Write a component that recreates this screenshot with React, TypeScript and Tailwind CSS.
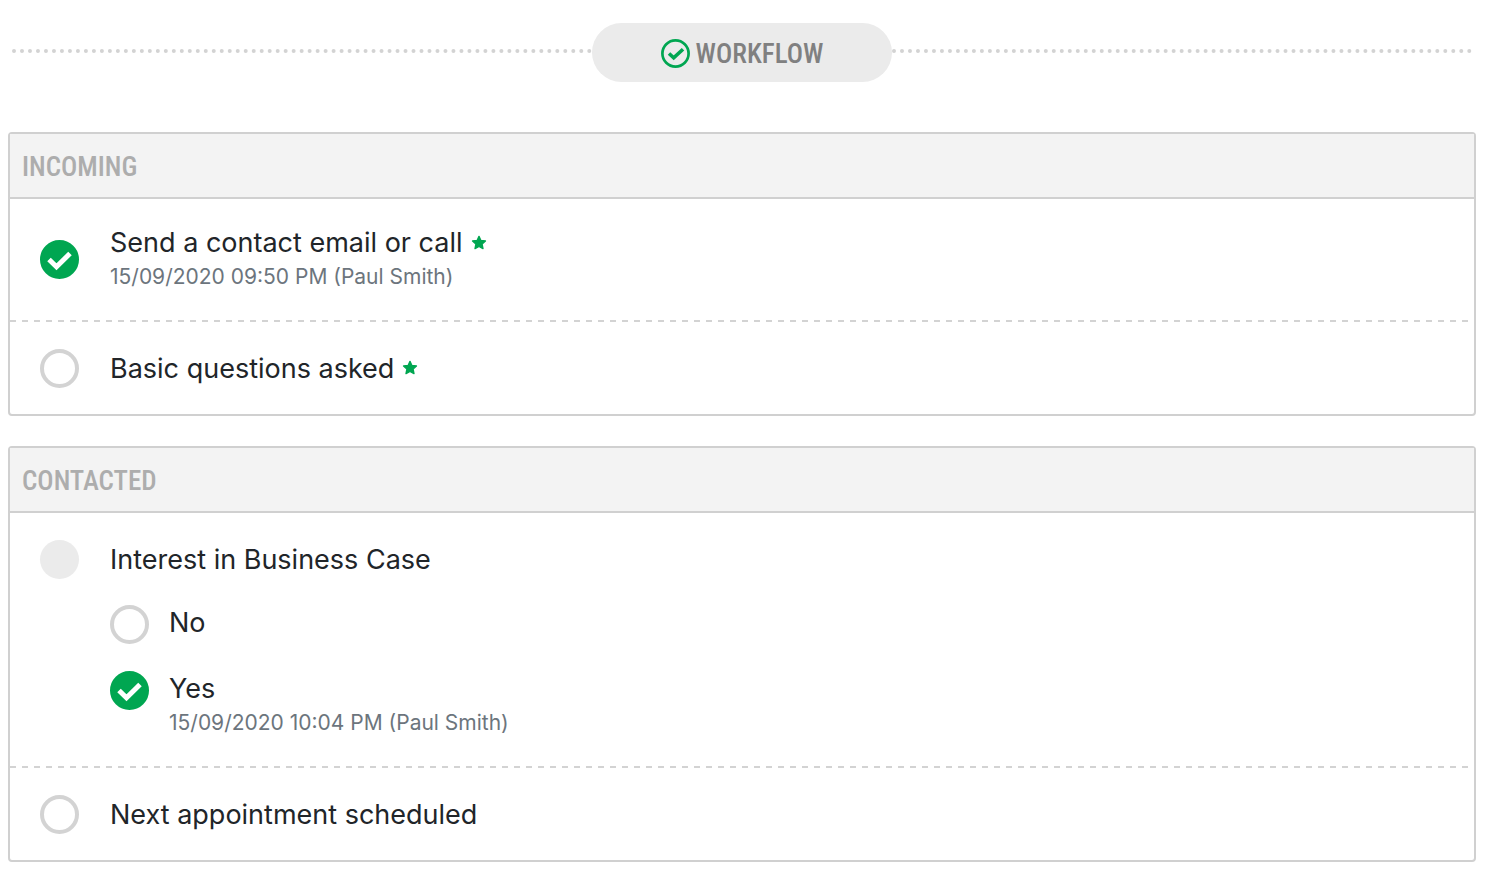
import type { ReactNode } from "react";

type TaskProps = {
    id: string;
    title: string;
    done?: boolean;
    required?: boolean;
    note?: string;
};

const Star = () => (
    <svg viewBox="0 0 24 24" className="mb-1 ml-2 inline-block size-4 align-middle" aria-label="required">
        <path
            d="M12 2l2.900 6.200 6.800.800-5 4.700 1.300 6.800-6-3.300-6 3.300 1.300-6.800-5-4.700 6.800-.800z"
            fill="#00a651"
            stroke="#00a651"
            strokeWidth="2"
            strokeLinejoin="round"
        />
    </svg>
);

type MarkProps = {
    id: string;
    type: "checkbox" | "radio";
    name?: string;
    done?: boolean;
};

const Mark = ({ id, type, name, done }: MarkProps) => (
    <span className="grid shrink-0">
        <input
            id={id}
            type={type}
            name={name}
            defaultChecked={done}
            className="peer col-start-1 row-start-1 size-[39px] appearance-none rounded-full border-4 border-[#d3d3d3] bg-white checked:border-[#00a651] checked:bg-[#00a651]"
        />
        <svg
            viewBox="0 0 39 39"
            fill="none"
            className="pointer-events-none invisible col-start-1 row-start-1 size-[39px] peer-checked:visible"
        >
            <path d="M9 19.500l7.500 7.300L30 13.500" stroke="#fff" strokeWidth="5" />
        </svg>
    </span>
);

const TaskText = ({ id, title, required, note }: TaskProps) => (
    <div>
        <label htmlFor={id} className="block text-[27px] leading-[35px] text-[#212529]">
            {title}
            {required && <Star />}
        </label>
        {note && <p className="text-[21px] leading-[34px] text-[#6c757d]">{note}</p>}
    </div>
);

const Task = (props: TaskProps) => (
    <li className="flex min-h-[92px] items-center gap-[31px] py-[26px] pl-[30px]">
        <Mark id={props.id} type="checkbox" done={props.done} />
        <TaskText {...props} />
    </li>
);

const Option = (props: TaskProps & { group: string }) => (
    <div className="flex min-h-10 items-start gap-5">
        <Mark id={props.id} type="radio" name={props.group} done={props.done} />
        <TaskText {...props} />
    </div>
);

const Divider = () => (
    <li
        role="separator"
        className="h-0.5 bg-[repeating-linear-gradient(90deg,#d3d3d3_0_6px,transparent_6px_12px)]"
    />
);

const Panel = ({ title, children }: { title: string; children: ReactNode }) => (
    <section className="rounded border-2 border-[#d0d0d0] bg-white">
        <h2 className="border-b-2 border-[#d0d0d0] bg-[#f3f3f3] px-3 pt-[15px] pb-3 font-['Roboto_Condensed','Liberation_Sans_Narrow','Liberation_Sans',sans-serif] text-[27px] leading-9 font-medium text-[#adadad]">
            {title}
        </h2>
        <ul>{children}</ul>
    </section>
);

export default function App() {
    return (
        <main className="bg-white pt-[23px] pr-2.5 pb-2 pl-2 font-[Inter,sans-serif]">
            {/* Header */}
            <header className="mx-1 mb-[50px] flex items-center">
                <div className="mb-1 flex-1 border-t-4 border-dotted border-[#d3d3d3]" />
                <h1 className="flex h-[59px] w-[300px] items-center justify-center gap-1.5 rounded-full bg-[#ebebeb] pt-0.5 font-['Roboto_Condensed','Liberation_Sans_Narrow','Liberation_Sans',sans-serif] text-[27px] leading-9 font-medium text-[#808080]">
                    <svg viewBox="0 0 29 29" fill="none" stroke="#00a651" className="size-[29px]">
                        <circle cx="14.500" cy="14.500" r="13.100" strokeWidth="2.700" />
                        <path d="M8 14.500l4.700 4.400L22 10.200" strokeWidth="3.600" />
                    </svg>
                    WORKFLOW
                </h1>
                <div className="mb-1 flex-1 border-t-4 border-dotted border-[#d3d3d3]" />
            </header>

            {/* Stages */}
            <div className="space-y-[30px]">
                <Panel title="INCOMING">
                    <Task
                        id="contact"
                        title="Send a contact email or call"
                        note="15/09/2020 09:50 PM (Paul Smith)"
                        done
                        required
                    />
                    <Divider />
                    <Task id="questions" title="Basic questions asked" required />
                </Panel>

                <Panel title="CONTACTED">
                    <li className="py-[26px] pl-[30px]">
                        <fieldset>
                            <legend className="flex h-10 items-center gap-[31px] text-[27px] leading-[35px] text-[#212529]">
                                <span className="size-[39px] rounded-full bg-[#ebebeb]" />
                                Interest in Business Case
                            </legend>
                            <div className="space-y-[26px] pt-[26px] pl-[70px]">
                                <Option id="interest-no" group="interest" title="No" />
                                <Option
                                    id="interest-yes"
                                    group="interest"
                                    title="Yes"
                                    note="15/09/2020 10:04 PM (Paul Smith)"
                                    done
                                />
                            </div>
                        </fieldset>
                    </li>
                    <Divider />
                    <Task id="appointment" title="Next appointment scheduled" />
                </Panel>
            </div>
        </main>
    );
}
